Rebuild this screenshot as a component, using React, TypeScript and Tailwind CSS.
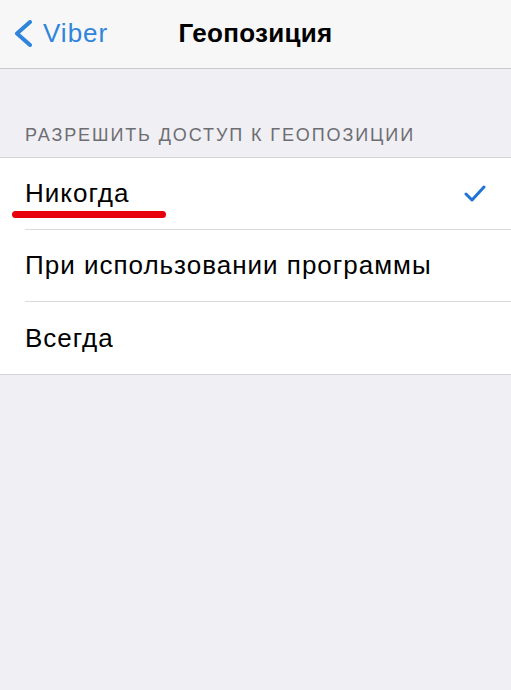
import { useState } from "react";

const options = ["Никогда", "При использовании программы", "Всегда"];

const font = { fontFamily: '"Liberation Sans", Arial, sans-serif' };

function BackChevron() {
  return (
    <svg width="22" height="27" viewBox="0 0 22 27" fill="none">
      <path d="M18 2 L5 13.5 L18 25" stroke="#2f84dc" strokeWidth="4" strokeLinecap="round" strokeLinejoin="round" />
    </svg>
  );
}

function Check() {
  return (
    <svg width="22" height="17" viewBox="0 0 22 17" fill="none">
      <path d="M2 9 L8 15 L20 2" stroke="#1f74d6" strokeWidth="3" strokeLinecap="round" strokeLinejoin="round" />
    </svg>
  );
}

export default function App() {
  const [selected, setSelected] = useState(0);

  return (
    <div className="min-h-screen bg-[#efeff4]" style={font}>
      {/* Navigation bar */}
      <div className="h-[69px] bg-[#f7f7f8] border-b border-[#c8c8cc] grid grid-cols-[1fr_auto_1fr] items-center">
        <button className="flex items-center gap-[9px] pl-[12px] pb-[2px] text-[#2f84dc] text-[26px] tracking-[1px]">
          <BackChevron />
          <span>Viber</span>
        </button>
        <h1 className="text-[26px] font-bold text-black pb-[2px] tracking-[0.3px]">Геопозиция</h1>
        <div />
      </div>

      {/* Section header */}
      <div className="pt-[53px] pb-[8px] px-[25px] text-[18px] text-[#6d6d72] uppercase tracking-[1.9px]">
        Разрешить доступ к геопозиции
      </div>

      {/* Options list */}
      <div className="bg-white border-y border-[#d3d3d8]">
        {options.map((label, i) => (
          <div
            key={label}
            onClick={() => setSelected(i)}
            className="relative pl-[25px] cursor-pointer"
          >
            <div
              className={`h-[72px] flex items-center justify-between pr-[25px] text-[26px] text-black tracking-[1px] ${
                i < options.length - 1 ? "border-b border-[#dcdce0]" : ""
              }`}
            >
              <span>{label}</span>
              {selected === i && <Check />}
            </div>
            {i === 0 && (
              <div className="absolute left-[12px] top-[53px] w-[154px] h-[7px] rounded-full bg-[#e8000b]" />
            )}
          </div>
        ))}
      </div>
    </div>
  );
}
